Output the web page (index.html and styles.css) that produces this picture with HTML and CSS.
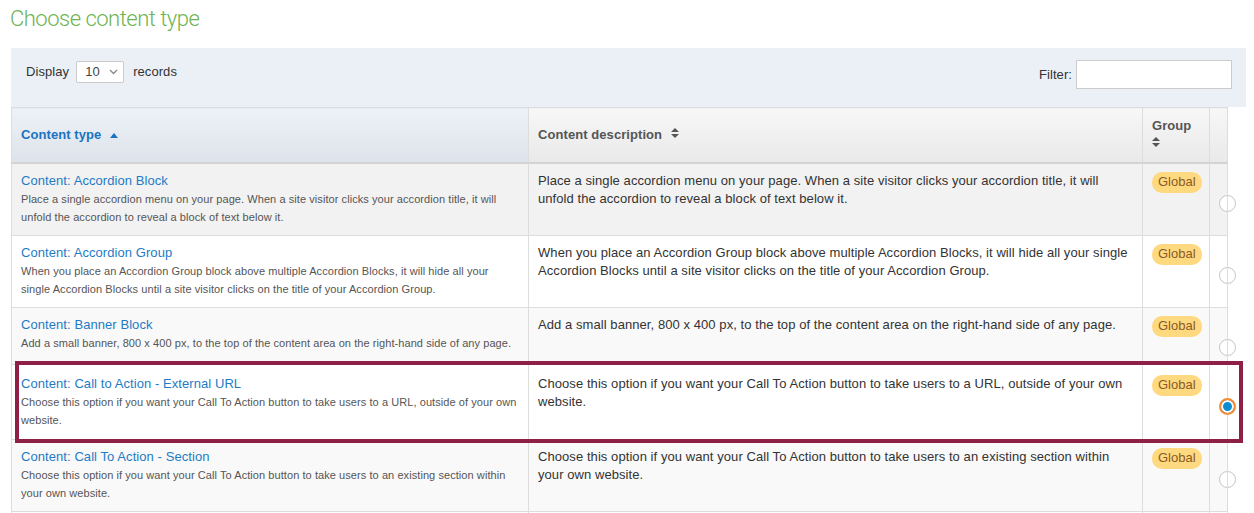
FILE: index.html
```html
<!DOCTYPE html>
<html lang="en">
<head>
    <meta charset="UTF-8">
    <meta name="viewport" content="width=device-width, initial-scale=1.0">
    <title>Choose content type</title>
    <link rel="stylesheet" href="styles.css">
</head>
<body>
    <div class="page">
        <h1 class="page-title">Choose content type</h1>

        <div class="datatable">
            <div class="toolbar">
                <label class="length">
                    Display
                    <span class="select">
                        <span class="select-value">10</span>
                        <svg class="chevron" width="9" height="6" viewBox="0 0 9 6"><path d="M1 1l3.5 3.5L8 1" fill="none" stroke="#888" stroke-width="1.3"/></svg>
                    </span>
                    records
                </label>
                <label class="filter">
                    Filter:
                    <input type="text" class="filter-input">
                </label>
            </div>

            <table class="types">
                <colgroup>
                    <col class="col-type">
                    <col class="col-desc">
                    <col class="col-group">
                    <col>
                </colgroup>
                <thead>
                    <tr>
                        <th class="sorted">Content type <svg class="sort" width="8" height="5" viewBox="0 0 8 5"><path d="M0 5L4 0l4 5z" fill="#1a73c2"/></svg></th>
                        <th>Content description <svg class="sort" width="8" height="10" viewBox="0 0 8 10"><path d="M0 4L4 0l4 4zM0 6l4 4 4-4z" fill="#555"/></svg></th>
                        <th>Group<br><svg class="sort" width="8" height="10" viewBox="0 0 8 10"><path d="M0 4L4 0l4 4zM0 6l4 4 4-4z" fill="#555"/></svg></th>
                        <th></th>
                    </tr>
                </thead>
                <tbody>
                    <tr class="hover">
                        <td>
                            <a href="#" class="type-name">Content: Accordion Block</a>
                            <div class="type-note">Place a single accordion menu on your page. When a site visitor clicks your accordion title, it will unfold the accordion to reveal a block of text below it.</div>
                        </td>
                        <td class="desc">Place a single accordion menu on your page. When a site visitor clicks your accordion title, it will unfold the accordion to reveal a block of text below it.</td>
                        <td><span class="badge">Global</span></td>
                        <td class="pick"><span class="radio"></span></td>
                    </tr>
                    <tr>
                        <td>
                            <a href="#" class="type-name">Content: Accordion Group</a>
                            <div class="type-note">When you place an Accordion Group block above multiple Accordion Blocks, it will hide all your single Accordion Blocks until a site visitor clicks on the title of your Accordion Group.</div>
                        </td>
                        <td class="desc">When you place an Accordion Group block above multiple Accordion Blocks, it will hide all your single Accordion Blocks until a site visitor clicks on the title of your Accordion Group.</td>
                        <td><span class="badge">Global</span></td>
                        <td class="pick"><span class="radio"></span></td>
                    </tr>
                    <tr class="odd">
                        <td>
                            <a href="#" class="type-name">Content: Banner Block</a>
                            <div class="type-note">Add a small banner, 800 x 400 px, to the top of the content area on the right-hand side of any page.</div>
                        </td>
                        <td class="desc">Add a small banner, 800 x 400 px, to the top of the content area on the right-hand side of any page.</td>
                        <td><span class="badge">Global</span></td>
                        <td class="pick"><span class="radio"></span></td>
                    </tr>
                    <tr class="selected">
                        <td>
                            <a href="#" class="type-name">Content: Call to Action - External URL</a>
                            <div class="type-note">Choose this option if you want your Call To Action button to take users to a URL, outside of your own website.</div>
                        </td>
                        <td class="desc">Choose this option if you want your Call To Action button to take users to a URL, outside of your own website.</td>
                        <td><span class="badge">Global</span></td>
                        <td class="pick"><span class="radio checked"></span></td>
                    </tr>
                    <tr class="odd">
                        <td>
                            <a href="#" class="type-name">Content: Call To Action - Section</a>
                            <div class="type-note">Choose this option if you want your Call To Action button to take users to an existing section within your own website.</div>
                        </td>
                        <td class="desc">Choose this option if you want your Call To Action button to take users to an existing section within your own website.</td>
                        <td><span class="badge">Global</span></td>
                        <td class="pick"><span class="radio"></span></td>
                    </tr>
                    <tr class="blank">
                        <td></td>
                        <td></td>
                        <td></td>
                        <td></td>
                    </tr>
                </tbody>
            </table>
        </div>
    </div>
</body>
</html>
```

FILE: styles.css
```css
/* Base */
* {
    margin: 0;
    padding: 0;
    box-sizing: border-box;
}

body {
    font-family: 'Liberation Sans', Arial, sans-serif;
    font-size: 13px;
    line-height: 18px;
    letter-spacing: 0.07px;
    color: #333;
    background: #fff;
}

.page {
    padding: 0 8px 0 11px;
}

/* Title */
.page-title {
    font-family: 'Roboto', 'Liberation Sans', sans-serif;
    font-weight: 300;
    font-size: 22px;
    line-height: 26px;
    letter-spacing: -0.5px;
    color: #6db451;
    padding-top: 6px;
    margin: 0 0 16px -1px;
}

/* Toolbar above table */
.toolbar {
    display: flex;
    justify-content: space-between;
    align-items: flex-start;
    background-color: #ebf0f6;
    padding: 12px 14px 18px 15px;
}

.length,
.filter {
    display: flex;
    align-items: center;
}

.length {
    margin-top: 1px;
}

.filter {
    gap: 4px;
}

.select {
    display: inline-flex;
    align-items: center;
    justify-content: space-between;
    width: 48px;
    height: 22px;
    margin: 0 9px 0 7px;
    padding: 0 5px 0 8px;
    background: #fff;
    border: 1px solid #ccc;
    border-radius: 2px;
    color: #444;
}

.select-value {
    line-height: 20px;
}

.filter-input {
    display: block;
    width: 156px;
    height: 29px;
    border: 1px solid #ccc;
    background: #fff;
    font: inherit;
}

/* Table */
.types {
    width: 100%;
    table-layout: fixed;
    border-collapse: collapse;
    border-left: 1px solid #ddd;
}

.col-type {
    width: 517px;
}

.col-desc {
    width: 614px;
}

.col-group {
    width: 67px;
}

.types th,
.types td {
    border: 1px solid #ddd;
    border-left: none;
    vertical-align: top;
    padding: 8px 9px 9px;
    text-align: left;
}

.types th {
    vertical-align: middle;
    font-weight: bold;
    color: #555;
    padding: 8px 9px;
    height: 55px;
    background: linear-gradient(#f7f7f7, #e9e9e9);
    border-bottom: 2px solid #d4d4d4;
}

.types th.sorted {
    color: #1a73c2;
    background: linear-gradient(#eef2f7, #dde3eb);
}

.sort {
    margin-left: 5px;
    vertical-align: 1px;
}

.types th:nth-child(3) .sort {
    margin-left: 0;
}

/* Rows */
.types tbody tr {
    background: #fff;
}

.types tr.odd {
    background: #f9f9f9;
}

.types tr.hover {
    background: #f2f2f2;
}

.types tr.blank td {
    height: 40px;
}

.type-name {
    display: block;
    color: #1e7bc6;
    text-decoration: none;
}

.type-note {
    font-size: 11px;
    color: #555;
}

.desc {
    color: #333;
}

.badge {
    display: inline-block;
    padding: 1px 6px 2px;
    border-radius: 10px;
    background: #ffd97f;
    color: #8a5a24;
    font-size: 13px;
    line-height: 18px;
    letter-spacing: 0;
}

.types td.pick {
    padding-bottom: 8px;
}

.radio {
    display: block;
    width: 17px;
    height: 17px;
    margin: 23px auto 0;
    border: 1px solid #c4c4c4;
    border-radius: 50%;
    background: #fff;
}

.radio.checked {
    border: 2px solid #f58c37;
    background: #0b8dd1;
    box-shadow: inset 0 0 0 2px #fff;
}

/* Highlighted (chosen) row */
.types tr.selected {
    position: relative;
}

.types tr.selected td {
    padding-top: 10px;
    padding-bottom: 10px;
}

.types tr.selected::after {
    content: '';
    position: absolute;
    left: 3px;
    right: 3px;
    top: -3px;
    bottom: -4px;
    border: 4px solid #8e1f47;
    pointer-events: none;
}
```
